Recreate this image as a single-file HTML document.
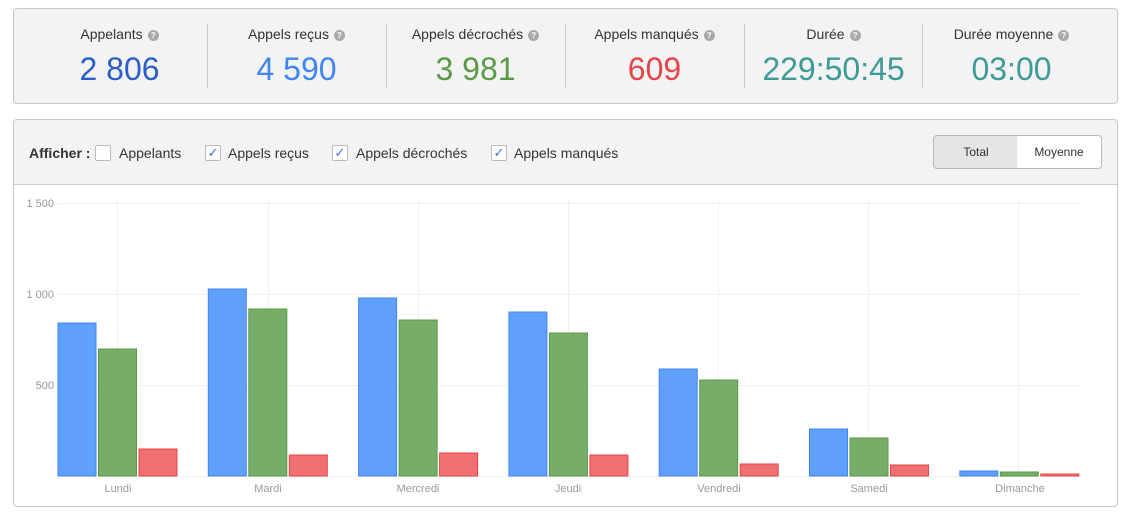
<!DOCTYPE html>
<html><head><style>
body{margin:0;background:#fff;font-family:"Liberation Sans",Arial,sans-serif;width:1130px;height:518px;position:relative;overflow:hidden}
.box1{position:absolute;left:13px;top:8px;width:1103px;height:94px;background:#f3f3f3;border:1px solid #c8c8c8;border-radius:4px}
.st{position:absolute;top:0;width:179px;text-align:center}
.st .l{position:absolute;top:17px;width:100%;font-size:14px;color:#333}
.st .v{position:absolute;top:42px;width:100%;font-size:32px}
.q{display:inline-block;width:11px;height:11px;border-radius:50%;background:#aaa;color:#fff;font-size:8px;line-height:11px;font-weight:bold;vertical-align:1px;margin-left:5px}
.sep{position:absolute;top:15px;width:1px;height:64px;background:#ccc}
.box2{position:absolute;left:13px;top:119px;width:1103px;height:386px;border:1px solid #c8c8c8;border-radius:4px;background:#fff;overflow:hidden}
.hdr{position:absolute;left:0;top:0;width:1103px;height:64px;background:#f3f3f3;border-bottom:1px solid #ccc}
.cb{position:absolute;top:25px;width:14px;height:14px;border:1px solid #bbb;border-radius:2px;background:#fff;font-size:13px;color:#3a6fe0;line-height:14px;text-align:center}
.lab{position:absolute;top:25px;font-size:14px;color:#333}
.btn{position:absolute;top:15px;height:32px;line-height:32px;font-size:12px;text-align:center;color:#333;border:1px solid #bbb}
</style></head><body>
<div class="box1">
<div class="st" style="left:16px"><div class="l">Appelants<span class="q">?</span></div><div class="v" style="color:#2a5fc8">2 806</div></div>
<div class="sep" style="left:193px"></div>
<div class="st" style="left:193px"><div class="l">Appels reçus<span class="q">?</span></div><div class="v" style="color:#3f86f3">4 590</div></div>
<div class="sep" style="left:372px"></div>
<div class="st" style="left:372px"><div class="l">Appels décrochés<span class="q">?</span></div><div class="v" style="color:#5a9a45">3 981</div></div>
<div class="sep" style="left:551px"></div>
<div class="st" style="left:551px"><div class="l">Appels manqués<span class="q">?</span></div><div class="v" style="color:#e8434a">609</div></div>
<div class="sep" style="left:730px"></div>
<div class="st" style="left:730px"><div class="l">Durée<span class="q">?</span></div><div class="v" style="color:#3d9a96">229:50:45</div></div>
<div class="sep" style="left:908px"></div>
<div class="st" style="left:908px"><div class="l">Durée moyenne<span class="q">?</span></div><div class="v" style="color:#3d9a96">03:00</div></div>
</div>
<div class="box2">
<div class="hdr">
<div class="lab" style="left:15px;font-weight:bold;top:25px">Afficher :</div>
<div class="cb" style="left:81px"></div><div class="lab" style="left:105px">Appelants</div>
<div class="cb" style="left:191px">✓</div><div class="lab" style="left:214px">Appels reçus</div>
<div class="cb" style="left:318px">✓</div><div class="lab" style="left:342px">Appels décrochés</div>
<div class="cb" style="left:477px">✓</div><div class="lab" style="left:500px">Appels manqués</div>
<div class="btn" style="left:919px;width:84px;background:#e5e5e5;border-radius:4px 0 0 4px">Total</div>
<div class="btn" style="left:1003px;width:84px;background:#fff;border-left:none;border-radius:0 4px 4px 0">Moyenne</div>
</div>
</div>
<svg style="position:absolute;left:0;top:0" width="1130" height="518">
<g stroke="#f0f0f0" stroke-width="1">
<line x1="58" y1="203.5" x2="1080" y2="203.5"/><line x1="58" y1="294.5" x2="1080" y2="294.5"/><line x1="58" y1="385.5" x2="1080" y2="385.5"/><line x1="58" y1="476.5" x2="1080" y2="476.5"/>
<line x1="117.5" y1="200" x2="117.5" y2="476"/><line x1="268.5" y1="200" x2="268.5" y2="476"/><line x1="418.5" y1="200" x2="418.5" y2="476"/><line x1="568.5" y1="200" x2="568.5" y2="476"/><line x1="718.5" y1="200" x2="718.5" y2="476"/><line x1="868.5" y1="200" x2="868.5" y2="476"/><line x1="1018.5" y1="200" x2="1018.5" y2="476"/>
</g>
<g font-size="11" fill="#999" text-anchor="end"><text x="54" y="207">1 500</text><text x="54" y="298">1 000</text><text x="54" y="389">500</text></g>
<g font-size="11" fill="#999" text-anchor="middle"><text x="118" y="492">Lundi</text><text x="268" y="492">Mardi</text><text x="418" y="492">Mercredi</text><text x="568" y="492">Jeudi</text><text x="719" y="492">Vendredi</text><text x="869" y="492">Samedi</text><text x="1020" y="492">Dimanche</text></g>
<g id="bars"></g>
</svg>
<script>
var d=[[323,349,449],[289,309,455],[298,320,453],[312,333,455],[369,380,464],[429,438,465],[471,472,474]];
var c=[["#619ffc","#3f86f3"],["#76ad68","#5a9a45"],["#f07072","#e8434a"]];var s='';
d.forEach(function(r,i){r.forEach(function(t,j){var x=58+i*150.3+j*40.5;s+='<rect x="'+x+'" y="'+t+'" width="38" height="'+(476-t)+'" fill="'+c[j][0]+'" stroke="'+c[j][1]+'" stroke-width="1"/>';});});
document.getElementById('bars').innerHTML=s;
</script>
</body></html>
